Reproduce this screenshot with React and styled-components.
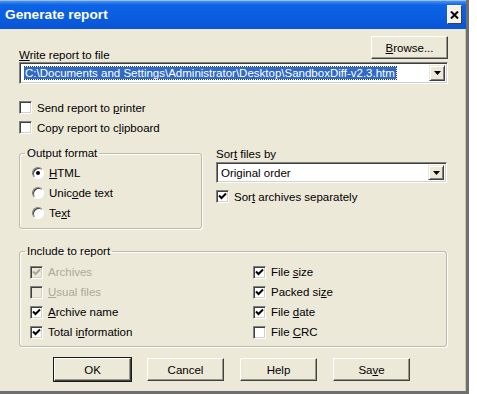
import React from 'react'
import styled, { createGlobalStyle } from 'styled-components'

const GlobalStyle = createGlobalStyle`
body{
    margin: 0;
    background: #fff;
    font-family: "Liberation Sans", Arial, sans-serif;
    font-size: 11.5px;
    color: #000;
}
`

const Window = styled.div`
width: 466px;
background: #ECE9D8;
border-right: 3px solid #6f6f6f;
border-bottom: 3px solid #6f6f6f;
box-shadow: inset -1px 0 0 #c9c6b6;
`

const TitleBar = styled.div`
height: 29px;
display: flex;
align-items: center;
justify-content: space-between;
padding: 0 4px 0 5px;
background: linear-gradient(to bottom, #e8efff 0, #4a90f5 1px, #0c63e4 5px, #0a5ddf 60%, #0854d6 100%);
`

const Title = styled.span`
color: #fff;
font-weight: bold;
font-size: 13.7px;
`

const CloseButton = styled.div`
width: 15px;
height: 19px;
display: flex;
align-items: center;
justify-content: center;
background: #f4f2ea;
border: 1px solid;
border-color: #fff #404040 #404040 #fff;
box-sizing: border-box;
`

const Body = styled.div`
padding: 7px 19px 10px 19px;
display: flex;
flex-direction: column;
`

const FileHeader = styled.div`
height: 26px;
display: flex;
justify-content: space-between;
align-items: flex-end;
`

const Label = styled.span`
line-height: 14px;
`

const Button = styled.button`
width: 77px;
height: 23px;
padding: 0;
font: inherit;
color: #000;
background: #ECE9D8;
border: 1px solid;
border-color: #fff #404040 #404040 #fff;
box-shadow: inset -1px -1px 0 #9a988c;
align-self: ${p => p.top ? 'flex-start' : 'auto'};
margin-right: ${p => p.top ? '-1px' : '0'};
outline: ${p => p.primary ? '1px solid #1a1a1a' : 'none'};
`

const Combo = styled.div`
height: ${p => p.h}px;
width: ${p => p.w}px;
box-sizing: border-box;
display: flex;
align-items: center;
background: #fff;
border: 1px solid;
border-color: #808080 #fff #fff #808080;
box-shadow: inset 1px 1px 0 #404040, inset -1px -1px 0 #d4d0c8;
padding: 2px 2px 2px 4px;
`

const ComboText = styled.span`
flex: 1;
white-space: nowrap;
overflow: hidden;
line-height: 14px;
`

const Selected = styled.span`
background: #316ac5;
color: #fff;
outline: 1px dotted #1c3e80;
padding: 0 1px;
`

const DropButton = styled.div`
width: 16px;
align-self: stretch;
box-sizing: border-box;
display: flex;
align-items: center;
justify-content: center;
background: #ECE9D8;
border: 1px solid;
border-color: #ECE9D8 #404040 #404040 #ECE9D8;
box-shadow: inset 1px 1px 0 #fff, inset -1px -1px 0 #808080;
`

const Checks = styled.div`
margin-top: 17px;
display: flex;
flex-direction: column;
gap: 7px;
`

const CheckRow = styled.div`
display: flex;
align-items: center;
gap: 5px;
height: 13px;
color: ${p => p.disabled ? '#aca899' : '#000'};
`

const Box = styled.span`
width: 13px;
height: 13px;
box-sizing: border-box;
flex: none;
display: flex;
align-items: center;
justify-content: center;
background: ${p => p.disabled ? '#ECE9D8' : '#fff'};
border: 1px solid;
border-color: #808080 #fff #fff #808080;
box-shadow: inset 1px 1px 0 #404040, inset -1px -1px 0 #d4d0c8;
`

const Round = styled.span`
width: 12px;
height: 12px;
box-sizing: border-box;
flex: none;
border-radius: 50%;
display: flex;
align-items: center;
justify-content: center;
background: #fff;
border: 1px solid;
border-color: #808080 #fff #fff #808080;
box-shadow: inset 1px 1px 0 #404040;
&::after{
    content: '';
    width: 4px;
    height: 4px;
    border-radius: 50%;
    background: ${p => p.on ? '#000' : 'transparent'};
}
`

const Middle = styled.div`
margin-top: 13px;
display: grid;
grid-template-columns: 183px 1fr;
column-gap: 14px;
align-items: start;
`

const Group = styled.fieldset`
margin: 0;
min-width: 0;
padding: ${p => p.pad};
border: 1px solid #bdbaa6;
border-radius: 3px;
box-shadow: inset 1px 1px 0 #fff, 1px 1px 0 #fff;
display: grid;
grid-template-columns: ${p => p.cols || '1fr'};
grid-auto-rows: 20px;
align-items: center;
legend{
    padding: 0 2px;
    margin-left: ${p => p.shift}px;
    line-height: 13px;
}
`

const SortCol = styled.div`
display: flex;
flex-direction: column;
padding-right: 1px;
& > ${Label}{
    margin-bottom: 1px;
}
& > ${CheckRow}{
    margin-top: 7px;
}
`

const Include = styled(Group)`
margin-top: 16px;
`

const ButtonBar = styled.div`
margin-top: 11px;
display: flex;
justify-content: center;
gap: 16px;
padding-right: 2px;
`

const Check = ({ on, disabled }) => (
    <Box disabled={disabled}>
        {on && (
            <svg width="9" height="9" viewBox="0 0 9 9">
                <path d="M1 3.5 L3.5 6 L8 1.5" fill="none" stroke={disabled ? '#aca899' : '#000'} strokeWidth="2" />
            </svg>
        )}
    </Box>
)

const Arrow = () => (
    <svg width="7" height="4" viewBox="0 0 7 4">
        <path d="M0 0 H7 L3.5 4 Z" fill="#000" />
    </svg>
)

const CheckItem = ({ on, disabled, children }) => (
    <CheckRow disabled={disabled}>
        <Check on={on} disabled={disabled} />
        <span>{children}</span>
    </CheckRow>
)

const RadioItem = ({ on, children }) => (
    <CheckRow>
        <Round on={on} />
        <span>{children}</span>
    </CheckRow>
)

const App = () => {
  return (
    <>
    <GlobalStyle />
    <Window>
        <TitleBar>
            <Title>Generate report</Title>
            <CloseButton>
                <svg width="9" height="8" viewBox="0 0 9 8">
                    <path d="M1 0.5 L8 7.5 M8 0.5 L1 7.5" stroke="#000" strokeWidth="2" />
                </svg>
            </CloseButton>
        </TitleBar>
        <Body>
            <FileHeader>
                <Label><u>W</u>rite report to file</Label>
                <Button top><u>B</u>rowse...</Button>
            </FileHeader>
            <Combo w={429} h={22}>
                <ComboText><Selected>C:\Documents and Settings\Administrator\Desktop\SandboxDiff-v2.3.htm</Selected></ComboText>
                <DropButton><Arrow /></DropButton>
            </Combo>
            <Checks>
                <CheckItem>Send report to <u>p</u>rinter</CheckItem>
                <CheckItem>Copy report to c<u>l</u>ipboard</CheckItem>
            </Checks>
            <Middle>
                <Group pad="3px 0 5px 12px" shift={-7}>
                    <legend>Output format</legend>
                    <RadioItem on><u>H</u>TML</RadioItem>
                    <RadioItem>Unic<u>o</u>de text</RadioItem>
                    <RadioItem>Te<u>x</u>t</RadioItem>
                </Group>
                <SortCol>
                    <Label>Sor<u>t</u> files by</Label>
                    <Combo w={231} h={21}>
                        <ComboText>Original order</ComboText>
                        <DropButton><Arrow /></DropButton>
                    </Combo>
                    <CheckItem on>Sor<u>t</u> archives separately</CheckItem>
                </SortCol>
            </Middle>
            <Include pad="4px 0 4px 10px" cols="223px 1fr" shift={-5}>
                <legend>Include to report</legend>
                <CheckItem on disabled>Archives</CheckItem>
                <CheckItem on>File <u>s</u>ize</CheckItem>
                <CheckItem disabled><u>U</u>sual files</CheckItem>
                <CheckItem on>Packed si<u>z</u>e</CheckItem>
                <CheckItem on><u>A</u>rchive name</CheckItem>
                <CheckItem on>File <u>d</u>ate</CheckItem>
                <CheckItem on>Total i<u>n</u>formation</CheckItem>
                <CheckItem>File <u>C</u>RC</CheckItem>
            </Include>
            <ButtonBar>
                <Button primary>OK</Button>
                <Button>Cancel</Button>
                <Button>Help</Button>
                <Button>Sa<u>v</u>e</Button>
            </ButtonBar>
        </Body>
    </Window>
    </>
  )
}

export default App
